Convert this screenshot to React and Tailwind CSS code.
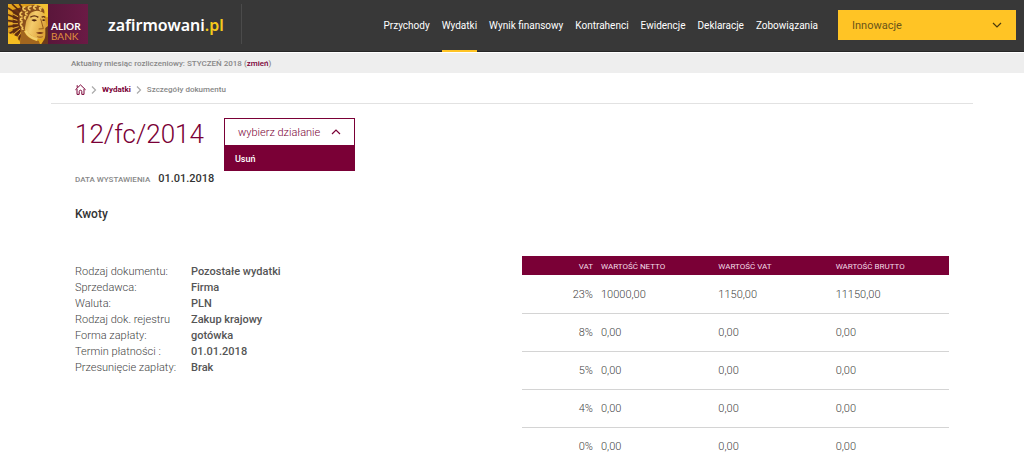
import React from "react";

const navItems = [
  "Przychody",
  "Wydatki",
  "Wynik finansowy",
  "Kontrahenci",
  "Ewidencje",
  "Deklaracje",
  "Zobowiązania",
];

const details = [
  ["Rodzaj dokumentu:", "Pozostałe wydatki"],
  ["Sprzedawca:", "Firma"],
  ["Waluta:", "PLN"],
  ["Rodzaj dok. rejestru", "Zakup krajowy"],
  ["Forma zapłaty:", "gotówka"],
  ["Termin płatności :", "01.01.2018"],
  ["Przesunięcie zapłaty:", "Brak"],
];

const vatRows = [
  ["23%", "10000,00", "1150,00", "11150,00"],
  ["8%", "0,00", "0,00", "0,00"],
  ["5%", "0,00", "0,00", "0,00"],
  ["4%", "0,00", "0,00", "0,00"],
  ["0%", "0,00", "0,00", "0,00"],
];

function Chevron({ className, d, box = "0 0 10 10" }) {
  return (
    <svg viewBox={box} className={className} fill="none" stroke="currentColor" strokeWidth="1.2" aria-hidden="true">
      <path d={d} />
    </svg>
  );
}

function AliorHead() {
  return (
    <svg viewBox="0 0 120 120" className="block size-10 shrink-0" aria-hidden="true">
      <defs>
        <linearGradient id="sun" x1="0" y1="0" x2="1" y2="1">
          <stop offset="0" stopColor="#e9a91c" />
          <stop offset="0.6" stopColor="#c98a1a" />
          <stop offset="1" stopColor="#f3b91e" />
        </linearGradient>
        <linearGradient id="skin" x1="0" y1="0" x2="1" y2="0.4">
          <stop offset="0" stopColor="#c98a28" />
          <stop offset="0.5" stopColor="#f4cc6c" />
          <stop offset="1" stopColor="#dea23a" />
        </linearGradient>
      </defs>
      <rect width="120" height="120" fill="url(#sun)" />
      <path d="M14 18L44 8l-8 96-22-18z" fill="#6b3414" />
      <g stroke="#5a2a12" strokeWidth="5" fill="none">
        <path d="M0 12l34 22M12 0l26 24M0 32l30 12M0 50l28 4M0 68l30-4M2 90l30-18M10 108l26-28M26 118l16-30M34 0l10 14" />
      </g>
      <g stroke="#e9b030" strokeWidth="3" fill="none">
        <path d="M0 22l30 16M0 41l28 8M0 59l30 0M0 78l32-10M6 100l30-25M18 114l22-30" />
      </g>
      <path d="M0 86l24 10 16 24H0z" fill="#f5bd22" />
      <path d="M80 0h40v40h-10z" fill="#f2c032" />
      <path
        d="M50 26c18-12 42-12 54 0 7 6 7 16 8 24l5 16c1 5-2 7-5 8l1 9-3 4 1 6c-1 8-5 13-13 13-13-1-24-8-34-17L44 72z"
        fill="url(#skin)"
      />
      <path d="M40 70l14 22c10 12 24 18 38 18l4 10H36z" fill="#a2661f" />
      <path d="M52 80c8 16 20 23 36 27" stroke="#f3d06e" strokeWidth="8" fill="none" />
      <path
        d="M34 46c-6-14 4-30 18-36 14-8 36-10 48-1 9 5 10 13 9 20-12-10-26-11-38-4-9 5-8 13-13 20-5 5-4 14-6 20-2 7 0 14-5 17-8-5-12-14-12-21-4-4-3-10-1-15z"
        fill="#8a4f1c"
      />
      <g fill="none" stroke="#f2c45c" strokeWidth="5" strokeLinecap="round">
        <path d="M52 20c-8-2-10-9-2-11M66 18c-8-4-6-11 3-11M82 15c-8-3-5-10 3-9M98 18c-6-4-4-9 3-6" />
        <path d="M42 36c-7-1-8-8-1-11M57 33c-6-1-6-8 1-9M42 51c-6-2-7-8 0-9M52 45c-4-2-3-6 1-7M41 66c-5-3-5-9 1-10M45 76c-3-1-4-4-1-6" />
      </g>
      <path d="M67 40c8-6 17-5 24 0M101 40c4-3 8-2 11 0" stroke="#5d2c10" strokeWidth="4" fill="none" />
      <path d="M70 48c6-4 12-3 17 1-6 5-12 4-17-1zM102 48c4-3 7-2 10 0-3 4-7 4-10 0z" fill="#4c220d" />
      <path d="M98 44l6 22 2 8-14 1" stroke="#9a5d1c" strokeWidth="3" fill="none" />
      <path d="M84 86c8-3 16-3 23 0-7 5-15 5-23 0z" fill="#743415" />
      <path d="M88 98c5 2 11 2 16 0" stroke="#94551b" strokeWidth="3" fill="none" />
      <path d="M112 72l8-6v54h-20l9-14c3-7 3-14 3-20z" fill="#6b3a1c" />
    </svg>
  );
}

function HomeIcon() {
  return (
    <svg viewBox="0 0 11 11" className="block size-[11px]" fill="none" stroke="currentColor" aria-hidden="true">
      <path d="M0.4 5.8L5.5 0.9l5.1 4.9" />
      <path d="M2 5v5.4h2.2V7.4c0-1.600 2.600-1.600 2.600 0v3H9V5" />
      <path d="M2.200 3.600V1.200" />
    </svg>
  );
}

export default function App() {
  return (
    <div className="min-h-screen bg-white font-[Roboto,sans-serif] text-[#333]">
      <header className="flex h-[52px] items-start justify-between border-b border-[#262626] bg-[#383838] pr-2 pl-2">
        <div className="flex shrink-0 items-center pt-1">
          <a href="#bank" aria-label="Alior Bank" className="flex h-10 w-20 items-center bg-linear-to-r from-[#4a1230] to-[#6b1a45]">
            <AliorHead />
            <span className="flex flex-col pt-[14px] pl-[3px] font-[Lato,sans-serif] text-[10px] leading-[10px] text-[#e0913c]">
              <b className="text-white">ALIOR</b>
              <span>BANK</span>
            </span>
          </a>
          <a
            href="#home"
            className="ml-5 flex h-10 items-center border-r border-[#4b4b4b] pt-px pr-[17px] font-['Noto_Sans',sans-serif] text-[16px] font-semibold text-white"
          >
            <span>
              zafirmowani<span className="text-[#f5c91b]">.pl</span>
            </span>
          </a>
        </div>
        <div className="flex shrink-0 items-start">
          <nav className="flex gap-3">
            {navItems.map((item) => (
              <a
                key={item}
                href={"#" + item}
                className={
                  "flex h-[52px] items-center border-b-2 pt-px text-[10px] text-white " +
                  (item === "Wydatki" ? "border-[#ffc425]" : "border-transparent")
                }
              >
                {item}
              </a>
            ))}
          </nav>
          <div className="relative mt-[10px] ml-5">
            <select
              aria-label="Firma"
              className="block h-[30px] w-[178px] appearance-none bg-[#ffc425] px-[14px] pt-[2px] text-[11px] text-[#6b5518]"
            >
              <option>Innowacje</option>
            </select>
            <Chevron
              className="pointer-events-none absolute top-[10px] right-[14px] size-[10px] text-[#4a3a0c]"
              d="M1 3l4 4 4-4"
            />
          </div>
        </div>
      </header>

      <div className="mt-px h-5 bg-[#eee]">
        <p className="mx-auto max-w-[922px] px-5 pt-px text-[8px] leading-5 font-medium text-[#888]">
          Aktualny miesiąc rozliczeniowy: STYCZEŃ 2018 (
          <a href="#zmien" className="text-[#7a0036]">
            zmień
          </a>
          )
        </p>
      </div>

      <main className="mx-auto max-w-[922px]">
        <nav
          aria-label="Okruszki"
          className="flex h-[31px] items-center gap-[5px] border-b border-[#e2e2e2] px-6 pt-[3px] text-[8px] text-[#888]"
        >
          <a href="#home" aria-label="Strona główna" className="text-[#7a0036]">
            <HomeIcon />
          </a>
          <Chevron className="h-2 w-[6px] text-[#aaa]" box="0 0 6 8" d="M1 0.500l3.500 3.500L1 7.500" />
          <a href="#wydatki" className="font-bold text-[#7a0036]">
            Wydatki
          </a>
          <Chevron className="h-2 w-[6px] text-[#aaa]" box="0 0 6 8" d="M1 0.500l3.500 3.500L1 7.500" />
          <span className="font-medium">Szczegóły dokumentu</span>
        </nav>

        <div className="px-6 pt-[14px]">
          <div className="flex items-start gap-5">
            <h1 className="text-[26px] leading-8 font-light text-[#7a0036]">12/fc/2014</h1>
            <div className="relative w-[131px]">
              <button
                type="button"
                aria-expanded="true"
                className="flex h-7 w-full items-center justify-between border border-[#7a0036] pt-[2px] pr-[13px] pl-[13px] text-[11px] font-light text-[#7a0036]"
              >
                wybierz działanie
                <Chevron className="size-[10px] text-[#7a0036]" d="M1 6l4-4 4 4" />
              </button>
              <div className="absolute top-7 left-0 w-full bg-[#7a0036]">
                <button type="button" className="block h-[25px] w-full px-[11px] pt-[2px] text-left text-[9px] font-medium text-white">
                  Usuń
                </button>
              </div>
            </div>
          </div>

          <p className="mt-[21px] flex items-baseline gap-2 leading-4">
            <span className="text-[8px] font-medium text-[#888]">DATA WYSTAWIENIA</span>
            <span className="text-[11px] font-medium">01.01.2018</span>
          </p>
          <h2 className="mt-[18px] text-[12px] leading-4 font-medium">Kwoty</h2>

          <div className="mt-[34px] flex items-start justify-between">
            <dl className="mt-[8px] text-[11px] leading-4">
              {details.map(([label, value]) => (
                <div key={label} className="flex">
                  <dt className="w-[116px] font-light text-[#444]">{label}</dt>
                  <dd className="font-medium text-[#555]">{value}</dd>
                </div>
              ))}
            </dl>
            <table className="w-[427px] table-fixed border-collapse text-left text-[11px] font-light text-[#444]">
              <thead>
                <tr className="h-[19px] bg-[#7a0036] text-[8px] text-[#f3dbe6]">
                  <th scope="col" className="w-[75px] pt-[2px] pr-1 text-right font-normal">VAT</th>
                  <th scope="col" className="pt-[2px] pl-1 font-normal">WARTOŚĆ NETTO</th>
                  <th scope="col" className="pt-[2px] pl-1 font-normal">WARTOŚĆ VAT</th>
                  <th scope="col" className="pt-[2px] pl-1 font-normal">WARTOŚĆ BRUTTO</th>
                </tr>
              </thead>
              <tbody>
                {vatRows.map(([rate, net, vat, gross]) => (
                  <tr key={rate} className="h-[38px] border-b border-[#d4d4d4] last:border-b-0">
                    <td className="pt-[2px] pr-1 text-right">{rate}</td>
                    <td className="pt-[2px] pl-1">{net}</td>
                    <td className="pt-[2px] pl-1">{vat}</td>
                    <td className="pt-[2px] pl-1">{gross}</td>
                  </tr>
                ))}
              </tbody>
            </table>
          </div>
        </div>
      </main>
    </div>
  );
}
